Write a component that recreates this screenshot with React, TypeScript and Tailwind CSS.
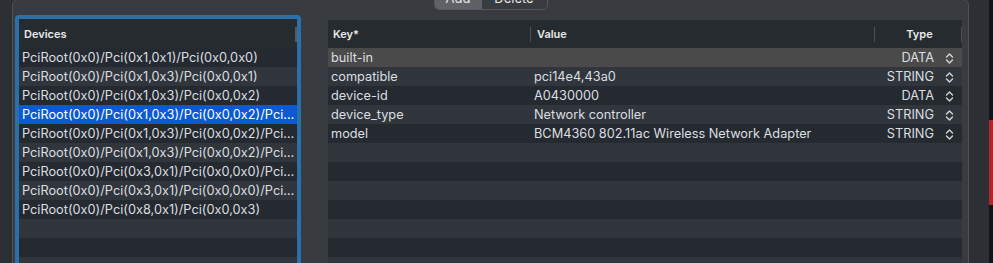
import React from 'react';

/* ── Data ── */

const devices = [
  'PciRoot(0x0)/Pci(0x1,0x1)/Pci(0x0,0x0)',
  'PciRoot(0x0)/Pci(0x1,0x3)/Pci(0x0,0x1)',
  'PciRoot(0x0)/Pci(0x1,0x3)/Pci(0x0,0x2)',
  'PciRoot(0x0)/Pci(0x1,0x3)/Pci(0x0,0x2)/Pci…',
  'PciRoot(0x0)/Pci(0x1,0x3)/Pci(0x0,0x2)/Pci…',
  'PciRoot(0x0)/Pci(0x1,0x3)/Pci(0x0,0x2)/Pci…',
  'PciRoot(0x0)/Pci(0x3,0x1)/Pci(0x0,0x0)/Pci…',
  'PciRoot(0x0)/Pci(0x3,0x1)/Pci(0x0,0x0)/Pci…',
  'PciRoot(0x0)/Pci(0x8,0x1)/Pci(0x0,0x3)',
];

const props = [
  { key: 'built-in', value: '', type: 'DATA' },
  { key: 'compatible', value: 'pci14e4,43a0', type: 'STRING' },
  { key: 'device-id', value: 'A0430000', type: 'DATA' },
  { key: 'device_type', value: 'Network controller', type: 'STRING' },
  { key: 'model', value: 'BCM4360 802.11ac Wireless Network Adapter', type: 'STRING' },
];

const FONT = { fontFamily: 'Inter, "Noto Sans", sans-serif' };

function rowBg(i: number) {
  return i % 2 === 0 ? 'bg-[#242a30]' : 'bg-[#30363c]';
}

function Stepper() {
  return (
    <svg width="9" height="13" viewBox="0 0 9 13" fill="none" className="shrink-0">
      <path d="M1.5 5 L4.5 2 L7.5 5" stroke="#d4d6d8" strokeWidth="1.4" strokeLinecap="round" strokeLinejoin="round" />
      <path d="M1.5 8 L4.5 11 L7.5 8" stroke="#d4d6d8" strokeWidth="1.4" strokeLinecap="round" strokeLinejoin="round" />
    </svg>
  );
}

/* ── Devices list ── */

function DeviceList() {
  return (
    <div className="w-[286px] h-[300px] shrink-0 border-[4px] border-[#2c70a9] rounded-[4px] overflow-hidden bg-[#30363c]">
      <div className="h-[29px] bg-[#262b30] flex items-center pl-[5px] pt-px">
        <span className="text-[11px] font-semibold text-[#e8e9ea]">Devices</span>
        <div className="ml-auto w-[2px] h-[15px] bg-[#55595d]" />
      </div>
      {Array.from({ length: 13 }).map((_, i) => {
        const label = devices[i];
        const selected = i === 3;
        return (
          <div
            key={i}
            className={`h-[19px] flex items-center pl-[3px] pt-px text-[12.75px] whitespace-nowrap overflow-hidden ${
              selected ? 'bg-[#0b5ad2] text-white' : `${rowBg(i)} text-[#dcdee0]`
            }`}
          >
            {label ?? ''}
          </div>
        );
      })}
    </div>
  );
}

/* ── Properties table ── */

function PropertyTable() {
  return (
    <div className="w-[634px] mt-[5px] shrink-0 bg-[#30363c]">
      <div className="h-[28px] bg-[#262b30] flex items-center pt-px text-[11px] font-semibold text-[#e8e9ea]">
        <div className="w-[202px] pl-[5px]">Key*</div>
        <div className="w-px h-[15px] bg-[#4c5054]" />
        <div className="w-[343px] pl-[6px]">Value</div>
        <div className="w-px h-[15px] bg-[#4c5054]" />
        <div className="flex-1 text-center pl-[3px]">Type</div>
        <div className="w-px h-[15px] bg-[#4c5054]" />
      </div>
      {Array.from({ length: 12 }).map((_, i) => {
        const p = props[i];
        const bg = i === 0 ? 'bg-[#4a4a4b]' : rowBg(i);
        return (
          <div key={i} className={`h-[19px] flex items-center pt-px text-[12.75px] text-[#dcdee0] whitespace-nowrap ${bg}`}>
            {p && (
              <>
                <div className="w-[202px] pl-[3px]">{p.key}</div>
                <div className="w-[344px] pl-[4px]">{p.value}</div>
                <div className="flex-1 flex items-center justify-end pr-[8px] gap-[11px]">
                  <span>{p.type}</span>
                  <Stepper />
                </div>
              </>
            )}
          </div>
        );
      })}
    </div>
  );
}

/* ══════════════════════════════ App ══════════════════════════════ */

export default function App() {
  return (
    <div className="w-[993px] h-[263px] overflow-hidden flex bg-[#2c3035]" style={FONT}>
      {/* left outer margin */}
      <div className="w-[12px] shrink-0" />

      {/* group box */}
      <div className="w-[957px] h-[300px] -mt-px shrink-0 flex flex-col border border-[#4e5256] rounded-[6px] bg-[#383c40]">
        {/* segmented control, clipped by top edge */}
        <div className="flex justify-center">
          <div className="-mt-[12px] h-[22px] flex rounded-[5px] border border-[#55595d] overflow-hidden text-[13px] text-[#e6e6e6]">
            <div className="w-[47px] flex items-center justify-center bg-[#5e6266]">Add</div>
            <div className="w-[65px] flex items-center justify-center">Delete</div>
          </div>
        </div>

        {/* panels */}
        <div className="flex items-start mt-[5px] pl-[2px]">
          <DeviceList />
          <div className="w-[27px] shrink-0" />
          <PropertyTable />
        </div>
      </div>

      {/* right outer margin + neighbouring window edge */}
      <div className="w-[20px] shrink-0" />
      <div className="w-[4px] shrink-0 flex flex-col bg-[#111315]">
        <div className="h-[120px]" />
        <div className="h-[85px] bg-[#b1262b]" />
      </div>
    </div>
  );
}
